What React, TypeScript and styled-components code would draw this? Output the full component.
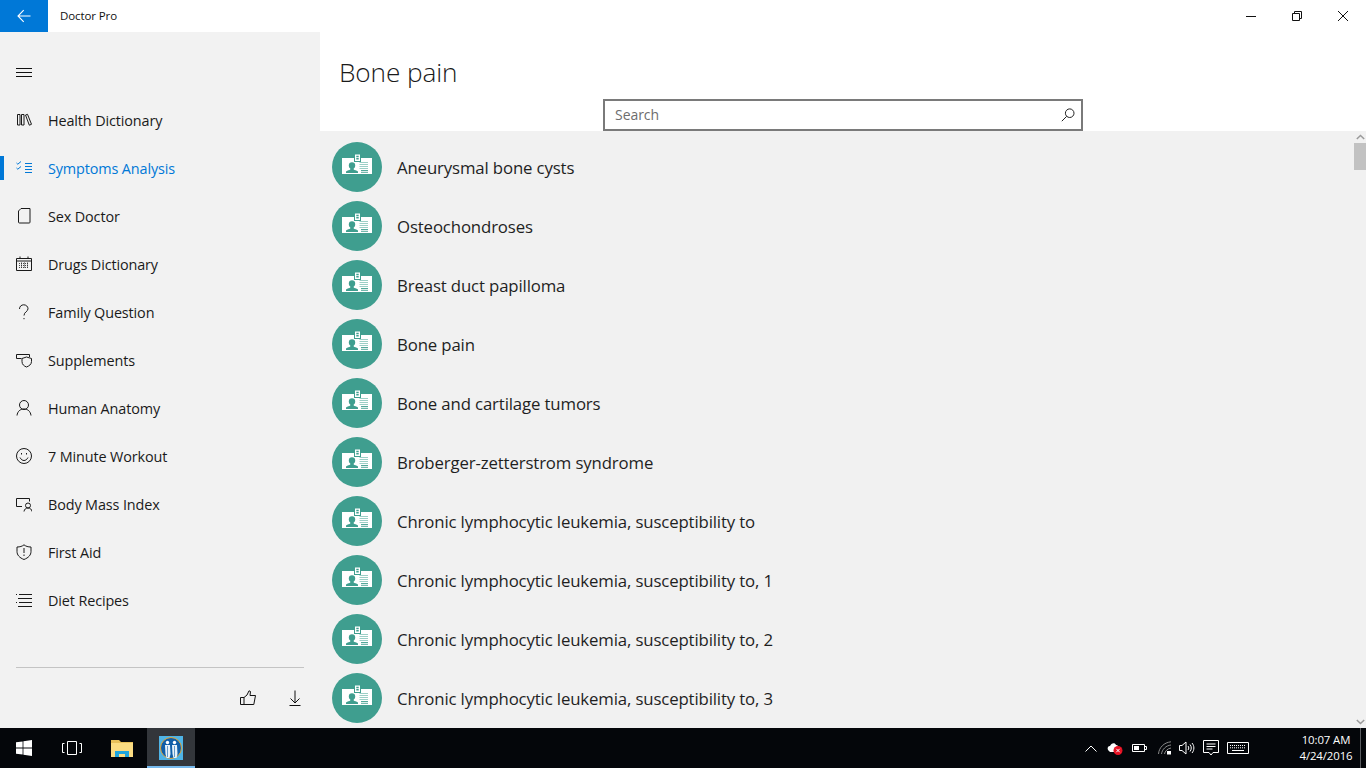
import React from "react";
import styled, { createGlobalStyle } from "styled-components";

const Global = createGlobalStyle`
  html, body { margin: 0; padding: 0; background: #f2f2f2; overflow: hidden; }
  * { box-sizing: border-box; }
  body { font-family: "Open Sans", "Liberation Sans", sans-serif; }
`;

const Page = styled.div`
  width: 1366px; height: 768px; display: flex; flex-direction: column; overflow: hidden;
`;
const TitleBar = styled.header`
  height: 32px; flex: none; background: #fff; display: flex; align-items: center;
`;
const BackButton = styled.div`
  width: 48px; height: 32px; background: #0078d7; display: flex; align-items: center; justify-content: center;
`;
const AppName = styled.div`
  margin-left: 12px; padding-bottom: 1px; font-size: 11.5px; color: #111; flex: 1; letter-spacing: -0.1px;
`;
const WindowButton = styled.div`
  width: 46px; height: 32px; display: flex; align-items: center; justify-content: center;
`;
const Body = styled.div`
  flex: 1; display: flex; min-height: 0;
`;
const Sidebar = styled.nav`
  width: 320px; flex: none; background: #f2f2f2; display: flex; flex-direction: column; padding-top: 16px;
`;
const MenuRow = styled.div`
  height: 48px; display: flex; align-items: center; padding-left: 16px; flex: none;
`;
const NavItem = styled.div<{ $active?: boolean }>`
  position: relative; height: 48px; flex: none; display: flex; align-items: center; gap: 16px; padding-left: 16px;
  font-size: 14.4px; letter-spacing: -0.12px; color: ${p => (p.$active ? "#0078d7" : "#1a1a1a")};
  ${p => p.$active ? `&::before { content: ""; position: absolute; left: 0; top: 12px; width: 4px; height: 24px; background: #0078d7; }` : ""}
`;
const IconSlot = styled.span`
  width: 16px; height: 16px; display: flex; flex: none;
`;
const SideFooter = styled.div`
  margin: auto 16px 0; height: 61px; border-top: 1px solid #c4c4c4; display: flex; justify-content: flex-end;
  align-items: center; gap: 31px; padding: 0 1px 0 0;
`;
const Main = styled.main`
  flex: 1; display: flex; flex-direction: column; min-width: 0;
`;
const MainHeader = styled.div`
  height: 99px; flex: none; background: #fff; display: flex; flex-direction: column;
`;
const PageTitle = styled.h1`
  margin: 19px 0 0 19px; font-size: 26.2px; font-weight: 300; color: #1a1a1a; line-height: 42px; letter-spacing: -0.1px;
`;
const SearchBox = styled.div`
  margin: 6px 0 0 283px; width: 480px; height: 32px; border: 2px solid #7a7a7a; background: #fff;
  display: flex; align-items: center; justify-content: space-between; padding: 0 6px 2px 10px;
  font-size: 14px; color: #6d6d6d; letter-spacing: -0.05px; flex: none;
`;
const SearchIcon = styled.span`
  display: flex; margin-top: 2px;
`;
const ListArea = styled.div`
  flex: 1; background: #f1f1f1; position: relative; overflow: hidden; padding: 11px 0 0 12px; min-height: 0;
`;
const Row = styled.div`
  height: 50px; margin-bottom: 9px; display: flex; align-items: center; gap: 15px;
  font-size: 16.8px; color: #1f1f1f; letter-spacing: -0.14px;
`;
const Badge = styled.div`
  width: 50px; height: 50px; border-radius: 50%; background: #3f9e8f; display: flex; align-items: center; justify-content: center; flex: none;
`;
const ScrollTrack = styled.div`
  position: absolute; right: 0; top: 0; bottom: 0; width: 12px; display: flex; flex-direction: column; align-items: center; justify-content: space-between;
`;
const ScrollTop = styled.div`
  width: 12px; display: flex; flex-direction: column; align-items: center; padding-top: 3px;
`;
const ScrollThumb = styled.div`
  width: 12px; height: 27px; margin-top: 3px; background: #c2c2c2;
`;
const ScrollBottom = styled.div`
  height: 12px; display: flex; align-items: center;
`;
const Taskbar = styled.footer`
  height: 40px; flex: none; background: #04060a; display: flex; align-items: stretch; color: #fff;
`;
const TaskSlot = styled.div<{ $active?: boolean; $w?: number }>`
  width: ${p => p.$w ?? 48}px; display: flex; align-items: center; justify-content: center; position: relative;
  background: ${p => (p.$active ? "#33363b" : "transparent")};
  ${p => p.$active ? `&::after { content: ""; position: absolute; left: 0; right: 0; bottom: 0; height: 2px; background: #76b9ed; }` : ""}
`;
const Tray = styled.div`
  margin-left: auto; display: flex; align-items: center; height: 100%;
`;
const TrayIcon = styled.div<{ $w: number }>`
  width: ${p => p.$w}px; display: flex; align-items: center; justify-content: center;
`;
const Clock = styled.div`
  width: 68px; margin-left: 43px; text-align: center; font-size: 11.4px; line-height: 16px; letter-spacing: -0.1px; color: #fff;
`;
const ShowDesktop = styled.div`
  width: 6px; height: 100%; border-left: 1px solid #5a5c60;
`;

const S = ({ children, w = 16, h = 16, c = "currentColor", sw = 1 }: { children: React.ReactNode; w?: number; h?: number; c?: string; sw?: number }) => (
  <svg width={w} height={h} viewBox={`0 0 ${w} ${h}`} fill="none" stroke={c} strokeWidth={sw} style={{ display: "block", flex: "none" }}>{children}</svg>
);

const icons: Record<string, React.ReactNode> = {
  books: <S><path d="M1.500 2.500h2.500v10.500h-2.500zM5.500 2.500h2.500v10.500h-2.500zM9.500 3l2-.7 4 10-2.200.9z" /></S>,
  check: <S><path d="M.5 3l1.300 1.200L5 1.500M.5 8l1.300 1.200L5 6.500" /><path d="M9 3.500h7M9 6.500h7M9 9.500h7M9 12.500h7" /></S>,
  page: <S><path d="M5 .5h9v13.700a.8.8 0 0 1-.8.8H3.500a1 1 0 0 1-1-1V3z" /></S>,
  calendar: <S><path d="M.5 2.500h15v12h-15zM.5 5h15" /><path d="M4 .5v2M12 .5v2" /><path d="M3 7.500h10M3 9.500h10M3 11.500h10M5.500 6.500v6M8.500 6.500v6M11.500 6.500v6" strokeDasharray="1 1" strokeWidth=".8" /></S>,
  question: <S><path d="M3.500 5C3.500 2.500 5.300.8 7.700.8S12 2.500 12 4.800c0 2.700-4 3.200-4 6.700" /><path d="M8 14v1.200" /></S>,
  shieldCard: <S><path d="M.5 6.500v-4h13v2.500M.5 6.500h5" /><path d="M6 6.500l4.500-1.500L15.500 6.500v3c0 3-2.500 4.500-5 5.500-2.500-1-4.500-2.500-4.500-5.500z" /></S>,
  person: <S><circle cx="8" cy="5" r="4.500" /><path d="M1 15.500c.5-4 3-6.500 7-6.500s6.500 2.500 7 6.500" /></S>,
  smile: <S><circle cx="8" cy="8" r="7.500" /><path d="M4 9.500c1 2 2.500 3 4 3s3-1 4-3" /><path d="M5.500 5v1.500M10.500 5v1.500" /></S>,
  body: <S><path d="M6 10.500H.5v-8h13v3" /><circle cx="12" cy="9.500" r="2.500" /><path d="M8 15.500c.3-2.200 1.800-3.500 4-3.500s3.700 1.300 4 3.500" /></S>,
  shield: <S><path d="M8 .8c1.800 1.500 4 2.200 7 2.200v4.500c0 3.500-2.500 6.300-7 8-4.500-1.700-7-4.500-7-8V3C4 3 6.200 2.300 8 .8z" /><path d="M8 4v5M8 10.500v1.500" /></S>,
  list: <S><path d="M0 2.500h1M3 2.500h13M2 6.500h14M0 10.500h1M3 10.500h13M2 14.500h14" /></S>,
};

const nav: [string, string][] = [
  ["books", "Health Dictionary"], ["check", "Symptoms Analysis"], ["page", "Sex Doctor"], ["calendar", "Drugs Dictionary"],
  ["question", "Family Question"], ["shieldCard", "Supplements"], ["person", "Human Anatomy"], ["smile", "7 Minute Workout"],
  ["body", "Body Mass Index"], ["shield", "First Aid"], ["list", "Diet Recipes"],
];

const rows = [
  "Aneurysmal bone cysts", "Osteochondroses", "Breast duct papilloma", "Bone pain", "Bone and cartilage tumors",
  "Broberger-zetterstrom syndrome", "Chronic lymphocytic leukemia, susceptibility to",
  "Chronic lymphocytic leukemia, susceptibility to, 1", "Chronic lymphocytic leukemia, susceptibility to, 2",
  "Chronic lymphocytic leukemia, susceptibility to, 3",
];

const CardIcon = () => (
  <svg width="30" height="26" viewBox="0 0 30 26" style={{ display: "block" }}>
    <rect x="0" y="4" width="30" height="16" fill="#fff" />
    <rect x="12.500" y="0" width="6" height="7.500" fill="#fff" stroke="#3f9e8f" strokeWidth="1" />
    <path d="M14.300 1.800h2.400v1.500h-2.400zM14.300 4h2.400v1.500h-2.400z" fill="#3f9e8f" />
    <circle cx="10" cy="11.500" r="3.200" fill="#3f9e8f" />
    <path d="M4 19v-1.500c1.500-1.200 3.500-1.300 4.300-2v-1.500h3.400v1.500c.8.700 2.800.8 4.300 2V19z" fill="#3f9e8f" />
    <path d="M17.500 8.500H26M17.500 10.500H26M17.500 12.500H26M17.500 14.500H26" stroke="#9bcfc6" strokeWidth="1.200" />
    <path d="M19 16.500h7M19 18.300h7" stroke="#3f9e8f" strokeWidth=".9" />
  </svg>
);

const AppLogo = () => (
  <svg width="24" height="24" viewBox="0 0 24 24" style={{ display: "block" }}>
    <rect width="24" height="24" fill="#4fb4e6" />
    <circle cx="12" cy="12" r="10.500" fill="#0f5ea8" stroke="#e0a63a" strokeWidth="1" />
    <circle cx="8.500" cy="6.500" r="1.700" fill="#fff" />
    <circle cx="15.500" cy="6.500" r="1.700" fill="#fff" />
    <path d="M6 9h5l.5 9-1 4h-3l-1-4zM13 9h5l.5 9-1 4h-3l-1-4z" fill="#e6f2fa" />
    <path d="M8.500 10v11M15.500 10v11" stroke="#0f5ea8" strokeWidth=".6" />
  </svg>
);

export default function App() {
  return (
    <Page>
      <Global />
      <TitleBar>
        <BackButton>
          <S c="#fff" w={14} h={14} sw={1.1}><path d="M13.500 7H1M6.700 1.200L1 7l5.700 5.800" /></S>
        </BackButton>
        <AppName>Doctor Pro</AppName>
        <WindowButton><S w={10} h={10} c="#111"><path d="M0 5.500h10" /></S></WindowButton>
        <WindowButton><S w={10} h={10} c="#111"><path d="M.5 2.500h7v7h-7z" /><path d="M2.500 2.500v-2h7v7h-2" /></S></WindowButton>
        <WindowButton><S w={10} h={10} c="#111"><path d="M0 0l10 10M10 0L0 10" /></S></WindowButton>
      </TitleBar>
      <Body>
        <Sidebar>
          <MenuRow><S c="#111"><path d="M0 4.500h16M0 8.500h16M0 12.500h16" /></S></MenuRow>
          {nav.map(([icon, label], i) => (
            <NavItem key={label} $active={i === 1}>
              <IconSlot>{icons[icon]}</IconSlot>
              {label}
            </NavItem>
          ))}
          <SideFooter>
            <S w={16} h={16} c="#111"><path d="M.5 7.500h3.500v7H.5zM4 7.500l3-2.500L9 .8l1.500.7-.5 4h5.500l-1.700 9H4" /></S>
            <S w={16} h={16} c="#111"><path d="M8 .5v12M3.500 8.500L8 13l4.500-4.500M2.500 15.500h11" /></S>
          </SideFooter>
        </Sidebar>
        <Main>
          <MainHeader>
            <PageTitle>Bone pain</PageTitle>
            <SearchBox>
              Search
              <SearchIcon><S w={14} h={14} c="#222"><circle cx="8.700" cy="5.200" r="4.300" /><path d="M5.700 8.300L.8 13.200" /></S></SearchIcon>
            </SearchBox>
          </MainHeader>
          <ListArea>
            {rows.map((r, i) => (
              <Row key={i}><Badge><CardIcon /></Badge>{r}</Row>
            ))}
            <ScrollTrack>
              <ScrollTop>
                <S w={9} h={6} c="#9a9a9a" sw={1.5}><path d="M.8 5L4.500 1.500 8.200 5" /></S>
                <ScrollThumb />
              </ScrollTop>
              <ScrollBottom><S w={9} h={6} c="#9a9a9a" sw={1.5}><path d="M.8 1L4.500 4.500 8.200 1" /></S></ScrollBottom>
            </ScrollTrack>
          </ListArea>
        </Main>
      </Body>
      <Taskbar>
        <TaskSlot>
          <svg width="16" height="16" viewBox="0 0 16 16" style={{ display: "block" }}><path d="M0 2.300l6.600-.9v6.200H0zM7.400 1.300L16 0v7.600H7.400zM0 8.400h6.600v6.200L0 13.700zM7.400 8.400H16V16l-8.600-1.300z" fill="#fff" /></svg>
        </TaskSlot>
        <TaskSlot>
          <S w={20} h={14} c="#fff"><path d="M5.500.5h9v13h-9z" /><path d="M2.500 2.500H.5v9h2M17.500 2.500h2v9h-2" /></S>
        </TaskSlot>
        <TaskSlot $w={51}>
          <svg width="22" height="18" viewBox="0 0 22 18" style={{ display: "block" }}>
            <path d="M0 1h8l2 2h12v15H0z" fill="#e8c05a" />
            <path d="M0 4h22v14H0z" fill="#fbdc82" />
            <path d="M4 18v-6h14v6h-4v-3H8v3z" fill="#20a6dc" />
          </svg>
        </TaskSlot>
        <TaskSlot $active><AppLogo /></TaskSlot>
        <Tray>
          <TrayIcon $w={24}><S w={12} h={7} c="#fff"><path d="M.5 6.500L6 1l5.500 5.500" /></S></TrayIcon>
          <TrayIcon $w={24}>
            <svg width="16" height="14" viewBox="0 0 16 14" style={{ display: "block" }}>
              <path d="M1 9c-1-2 0-4 2-4 1-3 5-4 6-1 2 0 3 2 2 4l-4 3H3z" fill="#fff" />
              <circle cx="11" cy="9.500" r="4.500" fill="#e81123" />
              <path d="M9.300 7.800l3.400 3.400M12.700 7.800l-3.400 3.400" stroke="#fff" strokeWidth="1" />
            </svg>
          </TrayIcon>
          <TrayIcon $w={24}>
            <S w={15} h={10} c="#fff"><path d="M.5 1.500h12v7H.5z" /><path d="M13 3.500h1.500v3H13" /><path fill="#fff" stroke="none" d="M2 3h5v4H2z" /></S>
          </TrayIcon>
          <TrayIcon $w={28}>
            <S w={14} h={14} c="#8a8a8a"><path d="M.5 13C1 6.500 6 1.500 13 .8M3.500 13C4 8.500 8 4.500 13 4M6.500 13c.4-2.700 3-5.500 6.500-6" /><path d="M9 10h4v3.500H9z" fill="#fff" stroke="none" /></S>
          </TrayIcon>
          <TrayIcon $w={16}>
            <S w={16} h={14} c="#fff"><path d="M.5 4.500h2.500L7 1v12L3 9.500H.5z" /><path d="M9 5c1 1.200 1 2.800 0 4M11 3.500c1.700 2 1.700 5 0 7M13 2c2.500 3 2.500 7 0 10" /></S>
          </TrayIcon>
          <TrayIcon $w={32}>
            <S w={16} h={16} c="#fff"><path d="M.5.500h15v12H10l-2 2.500-2-2.500H.5z" /><path d="M3.500 4h9M3.500 6.500h9M3.500 9h6" /></S>
          </TrayIcon>
          <TrayIcon $w={22}>
            <S w={22} h={12} c="#fff"><path d="M.5.500h21v11H.5z" /><path d="M3 3.500h16M3 5.800h16" strokeDasharray="1 1" /><path d="M5 8.500h12" /></S>
          </TrayIcon>
          <Clock>10:07 AM<br />4/24/2016</Clock>
          <ShowDesktop />
        </Tray>
      </Taskbar>
    </Page>
  );
}
